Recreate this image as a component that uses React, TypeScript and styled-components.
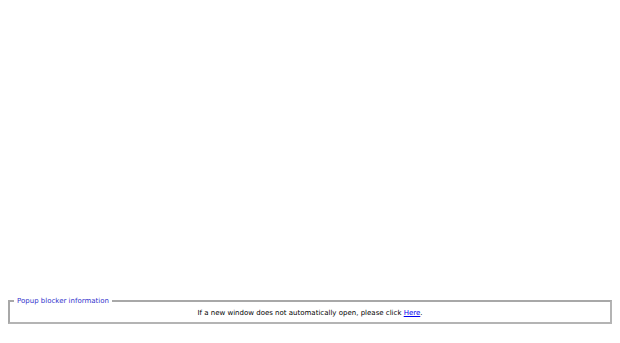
import React from 'react';
import styled, { createGlobalStyle } from 'styled-components';

const GlobalStyle = createGlobalStyle`
  body {
    margin: 8px;
    background: #ffffff;
    font-family: "DejaVu Sans", Verdana, sans-serif;
  }
`;

const Page = styled.div`
  display: flex;
  flex-direction: column;
`;

const Blank = styled.div`
  height: 289px;
`;

const InfoBox = styled.fieldset`
  margin: 0;
  padding: 2px 4px 3px;
  border: 2px solid #a8a8a8;
  border-right-color: #b4b4b4;
  border-bottom-color: #b4b4b4;
  font-size: 7px;
  color: #000000;
  text-align: center;
`;

const Legend = styled.legend`
  padding: 0 3px;
  margin-left: 0;
  color: #3333cc;
  font-size: 7px;
  text-align: left;
`;

const Message = styled.p`
  margin: 0;
  line-height: 12px;
`;

const Link = styled.a`
  color: #0000ee;
  text-decoration: underline;
`;

export default function App() {
  return (
    <Page>
      <GlobalStyle />
      <Blank />
      <InfoBox>
        <Legend>Popup blocker information</Legend>
        <Message>
          If a new window does not automatically open, please click <Link href="#">Here</Link>.
        </Message>
      </InfoBox>
    </Page>
  );
}
